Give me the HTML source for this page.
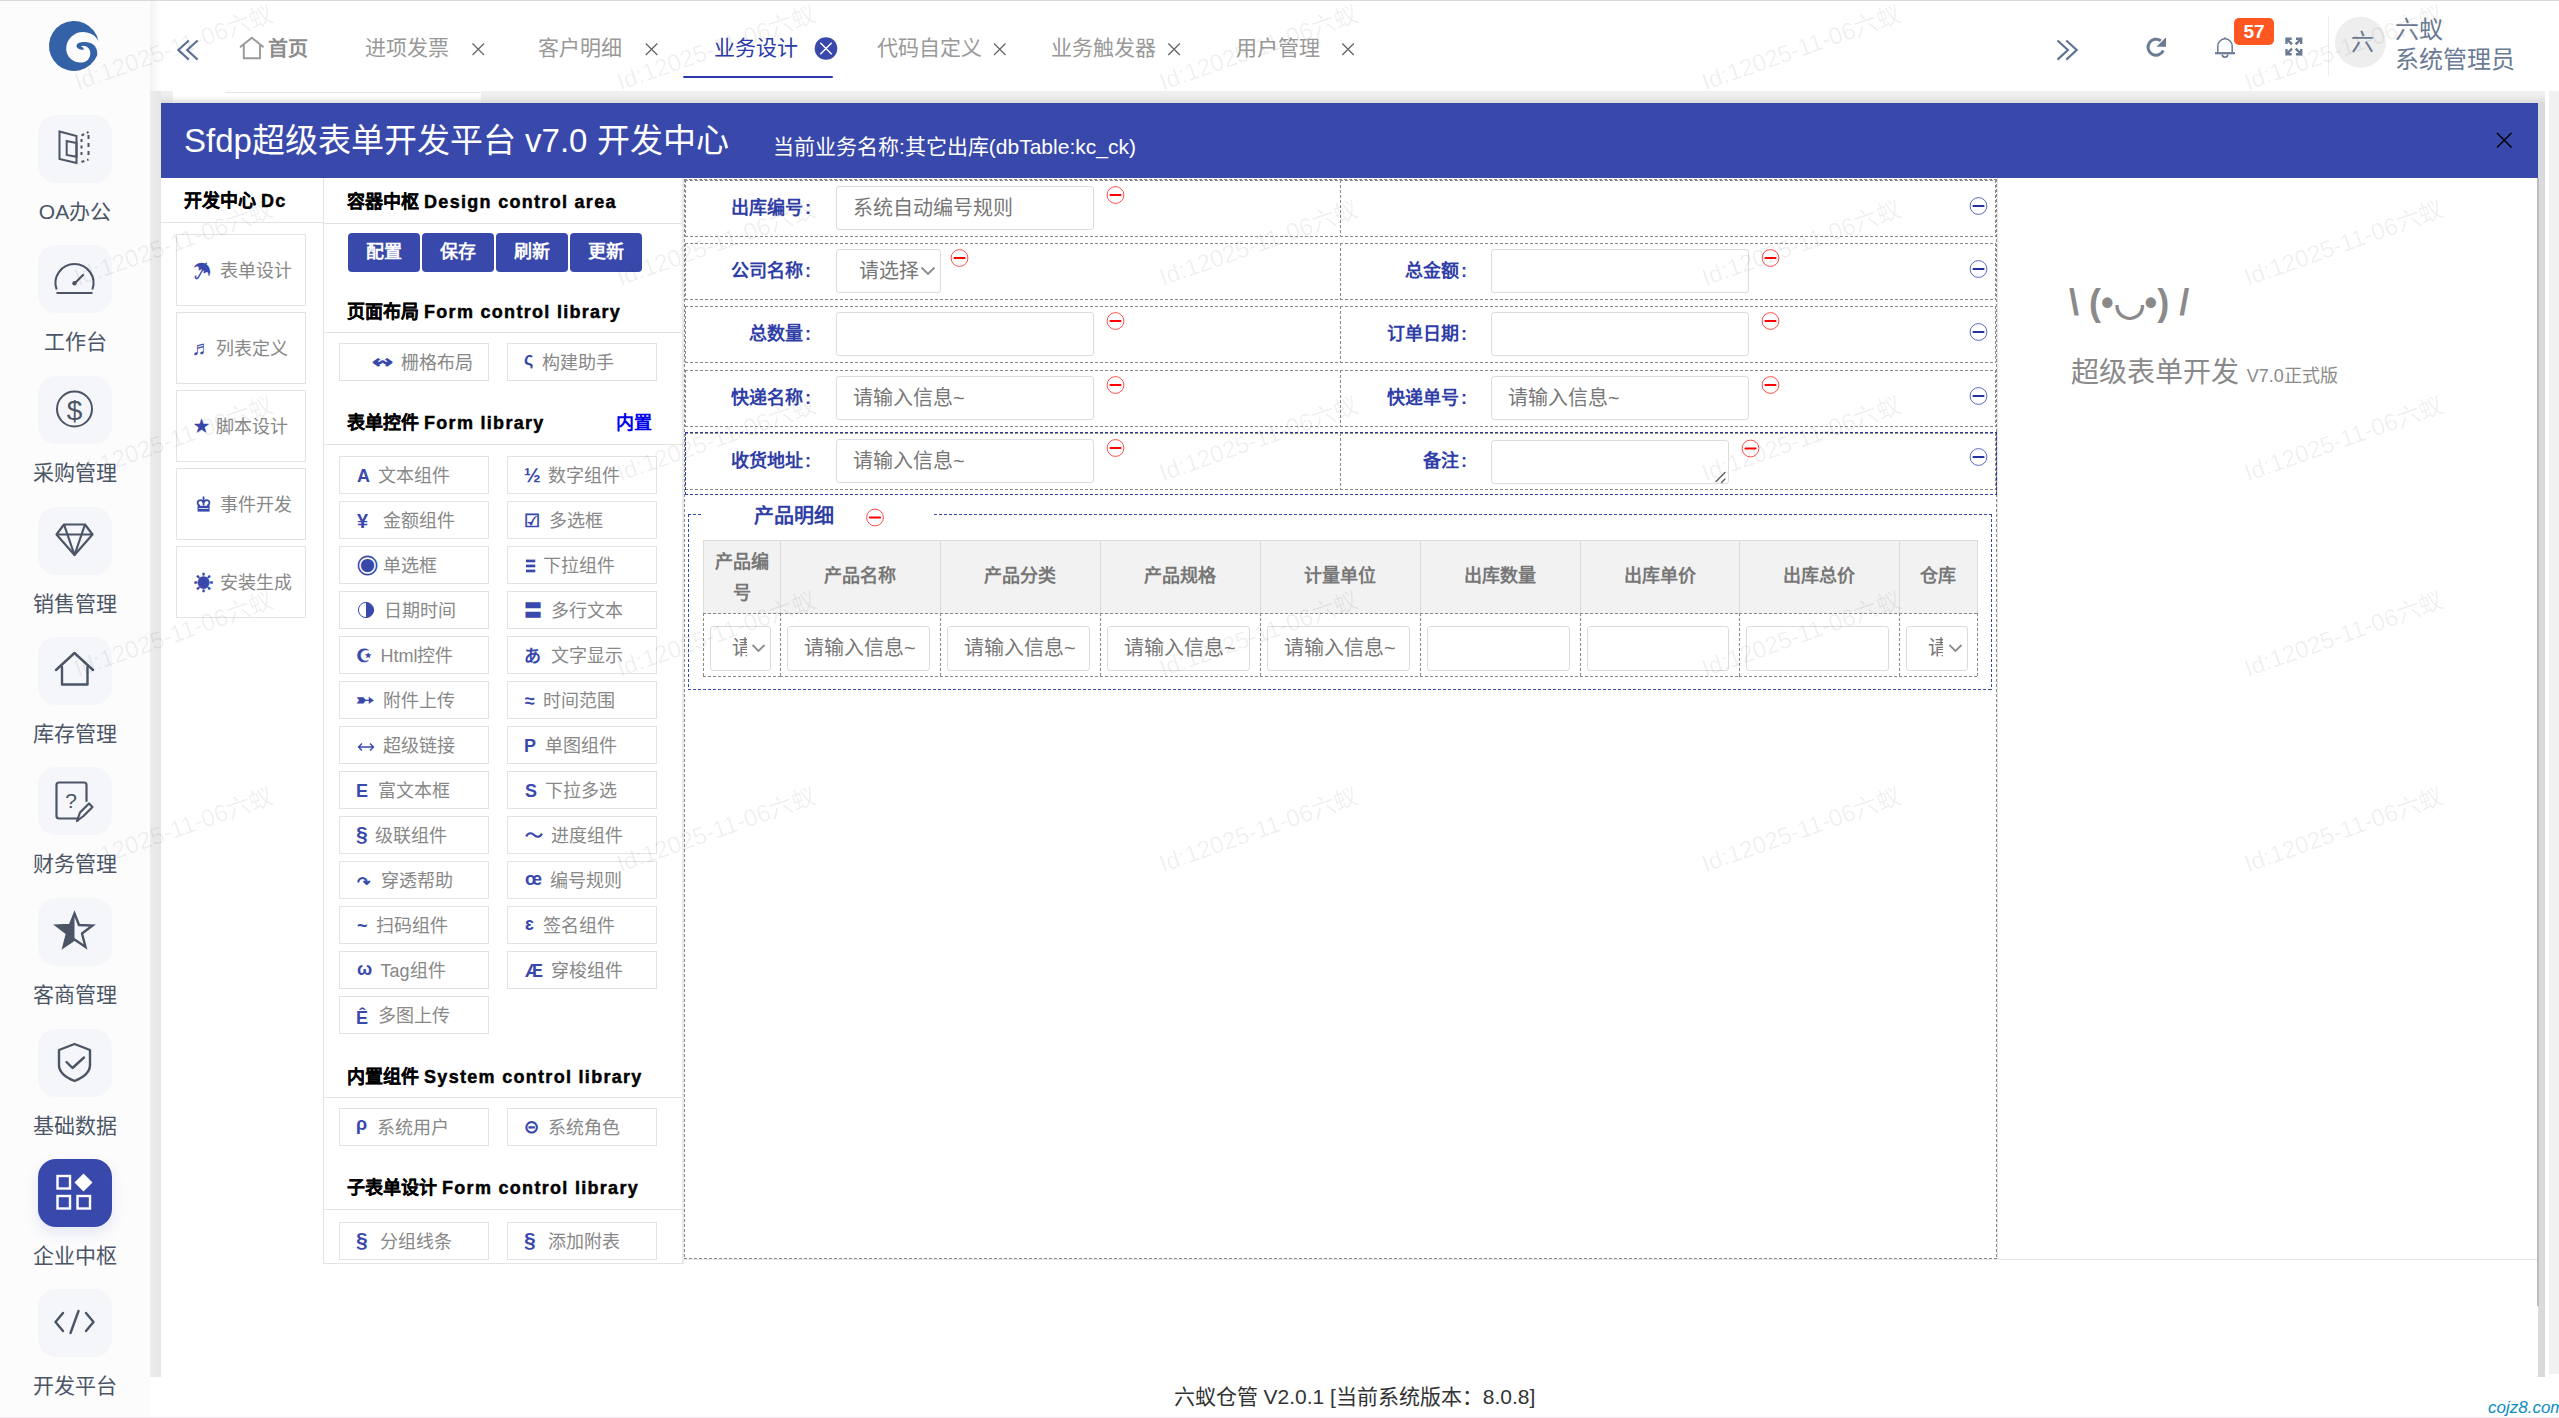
<!DOCTYPE html>
<html lang="zh-CN">
<head>
<meta charset="utf-8">
<title>Sfdp</title>
<style>
*{box-sizing:border-box;margin:0;padding:0}
html,body{width:2559px;height:1418px;overflow:hidden}
body{position:relative;font-family:"Liberation Sans",sans-serif;background:#fff;color:#333}
.a{position:absolute}
/* frame */
#topline{left:0;top:0;width:2559px;height:1px;background:#d9d9d9}
#side{left:0;top:1px;width:150px;height:1417px;background:#fcfcfd}
#hdr{left:150px;top:1px;width:2409px;height:90px;background:#fff}
#hdrsh{left:150px;top:1px;width:12px;height:90px;background:linear-gradient(90deg,#f3f3f3,#fff)}
#gtop{left:150px;top:91px;width:2395px;height:12px;background:linear-gradient(#f0f0f0 0,#eeeeee 5px,#dedede 11px,#dcdcdc 12px)}
#gleft{left:150px;top:91px;width:11px;height:1286px;background:linear-gradient(90deg,#ececec,#e6e6e6)}
#gright{left:2538px;top:103px;width:7px;height:1274px;background:#dadada}
#wright{left:2545px;top:91px;width:4px;height:1283px;background:#fff}
#rright{left:2549px;top:91px;width:10px;height:1283px;background:#f1f1f1}
#tabwhite{left:173px;top:91px;width:308px;height:12px;background:linear-gradient(#fff 0,#fff 5px,#e6e6e6 11px,#e2e2e2 12px)}
#tabline{left:225px;top:92px;width:256px;height:1px;background:#e6e6e6}
#modal{left:161px;top:103px;width:2377px;height:1274px;background:#fff;}
#mhead{left:161px;top:103px;width:2377px;height:75px;background:#3949ab}
#mscroll{left:2537px;top:178px;width:2px;height:1128px;background:#bdbdbd}
#footer{left:150px;top:1377px;width:2409px;height:40px;text-align:center;font-size:21px;color:#333;line-height:40px}
#botline{left:0;top:1417px;width:2559px;height:1px;background:#eee8ee}

/* sidebar */
.sbox{position:absolute;left:38px;width:74px;height:68px;border-radius:18px;background:#f4f6fa}
.sbox svg{position:absolute;left:0;top:0}
.slab{position:absolute;left:0;width:150px;text-align:center;font-size:21px;color:#4b5566;line-height:24px}

/* tabs */
.tab{position:absolute;top:34px;font-size:21px;line-height:28px;color:#999;white-space:nowrap}
.tabx{position:absolute;top:36px;width:14px;height:22px}
/*MODALCSS*/
.hd{font-size:18px;line-height:24px;font-weight:bold;color:#000;white-space:nowrap;-webkit-text-stroke:0.15px #000}
.lt{letter-spacing:1.3px;-webkit-text-stroke:0.45px #000}
.lbtn{width:130px;height:72px;border:1px solid #e3e3e3;white-space:nowrap}
.ic{color:#3949ab;font-weight:bold}
.bbtn{top:233px;width:72px;height:39px;border-radius:4px;background:#3949ab;color:#fff;font-size:18px;line-height:39px;text-align:center;font-weight:bold}
.pbtn{width:150px;height:38px;border:1px solid #e3e3e3;white-space:nowrap}
.pi{position:absolute;font-size:18px;line-height:30px;font-weight:bold;color:#3949ab}
.pt{position:absolute;top:6px;font-size:18px;line-height:30px;color:#888}
.flab{font-size:18px;line-height:24px;font-weight:bold;color:#2f3ea6;text-align:right;white-space:nowrap}
.inp{height:44px;border:1px solid #dcdcdc;border-radius:3px;background:#fff;font-size:20px;line-height:42px;color:#777;padding-left:16px;white-space:nowrap;overflow:hidden}
.th{font-size:18px;line-height:28px;font-weight:bold;color:#777;text-align:center}
/*/MODALCSS*/
</style>
</head>
<body>
<div id="topline" class="a"></div>
<div id="side" class="a"></div>
<div id="hdr" class="a"></div>
<div id="hdrsh" class="a"></div>
<div id="gtop" class="a"></div>
<div id="gleft" class="a"></div>
<div id="gright" class="a"></div>
<div id="wright" class="a"></div>
<div id="rright" class="a"></div>
<div id="tabwhite" class="a"></div>
<div id="tabline" class="a"></div>
<div id="modal" class="a"></div>
<div id="mhead" class="a"></div>
<div id="mscroll" class="a"></div>
<div id="footer" class="a">六蚁仓管 V2.0.1 [当前系统版本：8.0.8]</div>
<div id="botline" class="a"></div>
<div class="a" style="left:2488px;top:1397px;font-size:17px;line-height:22px;font-style:italic;color:#0d8cc0;white-space:nowrap">cojz8.com</div>


<!--SIDEBAR-->

<svg class="a" style="left:0;top:0" width="150" height="100" viewBox="0 0 150 100">
<path fill="#3462a6" transform="translate(0,1.2)" d="M98.5,40 A25,25 0 1 0 97.2,54 C98,47 94,41.5 87,41 C82,40.5 77,41.5 76.5,44.5 C76.5,47.5 80.5,48.8 83.5,48.6 C84.5,46.8 82.5,45.6 80.8,45.2 C82.5,44.2 86,44.5 88.5,47 C91,49.5 91,55 88,58.5 C85,61.5 80,62 75.5,60.5 C69.5,58 66.2,53 66.2,47.5 C66.2,38.5 73.5,30.8 83,30.8 C90,30.8 96,34.5 98.5,40 Z"/>
</svg>
<div class="sbox" style="top:115px;background:#f4f6fa;"></div>
<div class="slab" style="top:200px">OA办公</div>
<div class="sbox" style="top:245px;background:#f4f6fa;"></div>
<div class="slab" style="top:330px">工作台</div>
<div class="sbox" style="top:376px;background:#f4f6fa;"></div>
<div class="slab" style="top:461px">采购管理</div>
<div class="sbox" style="top:507px;background:#f4f6fa;"></div>
<div class="slab" style="top:592px">销售管理</div>
<div class="sbox" style="top:637px;background:#f4f6fa;"></div>
<div class="slab" style="top:722px">库存管理</div>
<div class="sbox" style="top:767px;background:#f4f6fa;"></div>
<div class="slab" style="top:852px">财务管理</div>
<div class="sbox" style="top:898px;background:#f4f6fa;"></div>
<div class="slab" style="top:983px">客商管理</div>
<div class="sbox" style="top:1029px;background:#f4f6fa;"></div>
<div class="slab" style="top:1114px">基础数据</div>
<div class="sbox" style="top:1159px;background:#3949ab;box-shadow:0 6px 14px rgba(57,73,171,.12);"></div>
<div class="slab" style="top:1244px">企业中枢</div>
<div class="sbox" style="top:1289px;background:#f4f6fa;"></div>
<div class="slab" style="top:1374px">开发平台</div>
<svg class="a" style="left:0;top:0" width="150" height="1418"><g fill="none" stroke="#4b5566" stroke-width="2" stroke-linejoin="miter"><path d="M59.5,131.5 L76.5,136 L76.5,163 L59.5,159 Z"/><path d="M66.7,141 L76.5,143 L76.5,156.7 L66.7,155 Z"/></g><g fill="none" stroke="#4b5566" stroke-width="2"><path d="M81.5,135.5 L88.5,132" stroke-dasharray="3,3"/><path d="M81.5,139 L81.5,158" stroke-dasharray="3,3.5"/><path d="M88.5,135 L88.5,158" stroke-dasharray="4,4"/><path d="M81.5,162 L88.5,159.5" stroke-dasharray="3,3"/></g><g fill="none" stroke="#4b5566" stroke-width="2.1" stroke-linecap="butt"><path d="M56.65,289.5 A19,19 0 1 1 92.35,289.5"/><path d="M56.5,293 L92.5,293"/><path d="M74.5,283.5 L83,275" stroke-linecap="round"/></g><circle cx="74.5" cy="283.3" r="2.2" fill="#4b5566"/><circle cx="74.5" cy="409" r="17.5" fill="none" stroke="#4b5566" stroke-width="2"/><text x="74.5" y="420" text-anchor="middle" font-family="Liberation Sans" font-size="28" fill="#4b5566">$</text><g fill="none" stroke="#4b5566" stroke-width="2.2" stroke-linejoin="round"><path d="M64,524.5 L85,524.5 L92.5,534.5 L74.5,555 L56.5,534.5 Z"/><path d="M56.5,534.5 L92.5,534.5"/><path d="M64,524.5 L74.5,555 L85,524.5"/></g><g fill="none" stroke="#4b5566" stroke-width="2.4" stroke-linejoin="round" stroke-linecap="round"><path d="M56,670 L74.5,653 L93,670"/><path d="M62,667 L62,684.5 L87.5,684.5 L87.5,667"/></g><g fill="none" stroke="#4b5566" stroke-width="2.2" stroke-linejoin="round" stroke-linecap="round"><path d="M78,818.5 L59,818.5 Q56.5,818.5 56.5,816 L56.5,785 Q56.5,782.5 59,782.5 L84,782.5 Q86.5,782.5 86.5,785 L86.5,801"/><path d="M77,821 L80,812.5 L89,803.5 L92.5,807 L83.5,816 Z"/></g><text x="71" y="808" text-anchor="middle" font-family="Liberation Sans" font-size="21" fill="#4b5566">?</text><path d="M74.5,913.5 L79,925 L92.5,925.5 L82,933.5 L85.5,947 L74.5,939.5 L63.5,947 L67,933.5 L56.5,925.5 L70,925 Z" fill="none" stroke="#4b5566" stroke-width="2.4" stroke-linejoin="miter"/><path d="M74.5,913.5 L70,925 L56.5,925.5 L67,933.5 L63.5,947 L74.5,939.5 Z" fill="#4b5566"/><g fill="none" stroke="#4b5566" stroke-width="2.4" stroke-linejoin="round" stroke-linecap="round"><path d="M74.5,1044 L90,1050 L90,1065 C90,1073 82,1078 74.5,1081 C67,1078 59,1073 59,1065 L59,1050 Z"/><path d="M66.5,1062 L72.5,1068 L84,1057.5"/></g><g fill="none" stroke="#fff" stroke-width="2.4"><rect x="57.5" y="1176" width="12.5" height="12.5"/><rect x="57.5" y="1196" width="12.5" height="12.5"/><rect x="77.5" y="1196" width="12.5" height="12.5"/></g><path d="M83.5,1173.5 L92.5,1182.5 L83.5,1191.5 L74.5,1182.5 Z" fill="#fff"/><g fill="none" stroke="#4b5566" stroke-width="2.4" stroke-linecap="round" stroke-linejoin="round"><path d="M63,1313 L55.5,1322 L63,1331"/><path d="M86,1313 L93.5,1322 L86,1331"/><path d="M78.5,1311 L70.5,1333"/></g></svg>
<!--/SIDEBAR-->
<!--HEADER-->

<svg class="a" style="left:150px;top:0" width="2409" height="91" viewBox="150 0 2409 91">
 <g fill="none" stroke="#5f7394" stroke-width="2.2" stroke-linecap="butt" stroke-linejoin="miter">
  <path d="M188.8,40.5 L178.4,50 L188.8,59.6"/><path d="M197.6,40.5 L187.2,50 L197.6,59.6"/>
 </g>
 <g fill="none" stroke="#9a9a9a" stroke-width="1.9">
  <path d="M240,47.3 L251.8,37.8 L263.6,47.3"/><path d="M243.8,45 L243.8,58.3 L260,58.3 L260,45"/>
 </g>
 <g fill="none" stroke="#5f7394" stroke-width="2.2">
  <path d="M2057.5,40.5 L2067.9,50 L2057.5,59.6"/><path d="M2066.3,40.5 L2076.7,50 L2066.3,59.6"/>
 </g>
 <path d="M2163.3,50.5 A8,8 0 1 1 2160.8,40.8" fill="none" stroke="#6b7b94" stroke-width="3"/>
 <path d="M2156.5,46.8 L2166,37.3 L2166,46.8 Z" fill="#6b7b94"/>
 <g fill="none" stroke="#6b7b94">
  <path d="M2217.8,52.5 L2217.8,46 A7.2,7.2 0 0 1 2232.2,46 L2232.2,52.5" stroke-width="1.5"/>
  <path d="M2215,53.2 L2235,53.2" stroke-width="2.2"/>
  <path d="M2222.3,54.5 A2.7,2.7 0 0 0 2227.7,54.5" stroke-width="1.7"/>
  <path d="M2225,37.2 L2225,38.8" stroke-width="1.5"/>
 </g>
 <g fill="none" stroke="#6b7b94" stroke-width="2.4">
  <path d="M2286.5,44 L2286.5,38.8 L2291.7,38.8 M2286.8,39.1 L2292,44.3"/>
  <path d="M2301.2,44 L2301.2,38.8 L2296,38.8 M2300.9,39.1 L2295.7,44.3"/>
  <path d="M2286.5,49 L2286.5,54.2 L2291.7,54.2 M2286.8,53.9 L2292,48.7"/>
  <path d="M2301.2,49 L2301.2,54.2 L2296,54.2 M2300.9,53.9 L2295.7,48.7"/>
 </g>
 <rect x="2328" y="16" width="1" height="60" fill="#ececec"/>
 <circle cx="2360.5" cy="42.3" r="25.5" fill="#eeeeee"/>
 <rect x="683" y="76" width="150" height="2" rx="1" fill="#2b3aa8"/>
 <circle cx="826" cy="48.5" r="11.3" fill="#3949ab"/>
 <path d="M820.3,42.8 L831.7,54.2 M831.7,42.8 L820.3,54.2" stroke="#fff" stroke-width="1.4"/>
 <g stroke="#666" stroke-width="1.3">
  <path d="M472.5,43.5 L484,55 M484,43.5 L472.5,55"/>
  <path d="M645.8,43.5 L657.3,55 M657.3,43.5 L645.8,55"/>
  <path d="M994,43.5 L1005.5,55 M1005.5,43.5 L994,55"/>
  <path d="M1168.3,43.5 L1179.8,55 M1179.8,43.5 L1168.3,55"/>
  <path d="M1342.3,43.5 L1353.8,55 M1353.8,43.5 L1342.3,55"/>
 </g>
</svg>
<div class="tab" style="left:268px;font-weight:bold;color:#8c8c8c;font-size:20px;top:35px">首页</div>
<div class="tab" style="left:365px">进项发票</div>
<div class="tab" style="left:538px">客户明细</div>
<div class="tab" style="left:714px;color:#2b3aa8">业务设计</div>
<div class="tab" style="left:877px">代码自定义</div>
<div class="tab" style="left:1051px">业务触发器</div>
<div class="tab" style="left:1236px">用户管理</div>
<div class="a" style="left:2234px;top:18px;width:40px;height:27px;background:#ff5722;border-radius:5px;color:#fff;font-weight:bold;font-size:19px;line-height:27px;text-align:center">57</div>
<div class="a" style="left:2351px;top:28px;font-size:23px;line-height:28px;color:#6b7b94">六</div>
<div class="a" style="left:2395px;top:16px;font-size:24px;line-height:28px;color:#6b7b94;white-space:nowrap">六蚁</div>
<div class="a" style="left:2395px;top:46px;font-size:24px;line-height:28px;color:#6b7b94;white-space:nowrap">系统管理员</div>
<!--/HEADER-->
<!--MODAL-->
<div class="a" style="left:184px;top:121px;font-size:33px;line-height:40px;color:#fff;white-space:nowrap">Sfdp超级表单开发平台 v7.0 开发中心</div>
<div class="a" style="left:773px;top:133px;font-size:21px;line-height:28px;color:#fff;white-space:nowrap">当前业务名称:其它出库(dbTable:kc_ck)</div>
<svg class="a" style="left:2490px;top:126px" width="28" height="28"><path d="M7,7 L21.5,21.5 M21.5,7 L7,21.5" stroke="#000" stroke-width="1.5"/></svg>
<div class="a" style="left:161px;top:222px;width:162px;height:1px;background:#e3e3e3"></div>
<div class="a" style="left:323px;top:178px;width:1px;height:1086px;background:#e3e3e3"></div>
<div class="a" style="left:682px;top:178px;width:2px;height:1086px;background:#e9e9e9"></div>
<div class="a" style="left:323px;top:1263px;width:360px;height:1px;background:#e3e3e3"></div>
<div class="a" style="left:1997px;top:178px;width:1px;height:1082px;background:#e6e6e6"></div>
<div class="a" style="left:684px;top:1259px;width:1853px;height:1px;background:#e6e6e6"></div>
<div class="a hd" style="left:184px;top:189px">开发中心 <span class="lt">Dc</span></div>
<div class="a hd" style="left:347px;top:190px">容器中枢 <span class="lt">Design control area</span></div>
<div class="a" style="left:323px;top:223px;width:359px;height:1px;background:#e3e3e3"></div>
<div class="a bbtn" style="left:348px">配置</div>
<div class="a bbtn" style="left:422px">保存</div>
<div class="a bbtn" style="left:496px">刷新</div>
<div class="a bbtn" style="left:570px">更新</div>
<div class="a hd" style="left:347px;top:300px">页面布局 <span class="lt">Form control library</span></div>
<div class="a" style="left:323px;top:332px;width:359px;height:1px;background:#e3e3e3"></div>
<div class="a hd" style="left:347px;top:411px">表单控件 <span class="lt">Form library</span></div><div class="a" style="left:616px;top:411px;font-size:18px;line-height:24px;font-weight:bold;color:#0000ee">内置</div>
<div class="a" style="left:323px;top:444px;width:359px;height:1px;background:#e3e3e3"></div>
<div class="a hd" style="left:347px;top:1065px">内置组件 <span class="lt">System control library</span></div>
<div class="a" style="left:323px;top:1097px;width:359px;height:1px;background:#e3e3e3"></div>
<div class="a hd" style="left:347px;top:1176px">子表单设计 <span class="lt">Form control library</span></div>
<div class="a" style="left:323px;top:1209px;width:359px;height:1px;background:#e3e3e3"></div>
<div class="a pbtn" style="left:339px;top:343px"><span class="pi" style="left:35px;top:3px;transform:scaleX(1.4)">↭</span><span class="pt" style="left:61px;top:4px">栅格布局</span></div>
<div class="a pbtn" style="left:507px;top:343px"><span class="pi" style="left:16px;top:0px;">ς</span><span class="pt" style="left:34.39999999999998px;top:4px">构建助手</span></div>
<div class="a pbtn" style="left:339px;top:456px"><span class="pi" style="left:17px;top:4px;">A</span><span class="pt" style="left:38px;top:4px">文本组件</span></div>
<div class="a pbtn" style="left:507px;top:456px"><span class="pi" style="left:16px;top:3px;font-size:20px">½</span><span class="pt" style="left:39.5px;top:4px">数字组件</span></div>
<div class="a pbtn" style="left:339px;top:501px"><span class="pi" style="left:17px;top:4px;font-size:20px">¥</span><span class="pt" style="left:43px;top:4px">金额组件</span></div>
<div class="a pbtn" style="left:507px;top:501px"><span class="pi" style="left:16px;top:4px;">☑</span><span class="pt" style="left:41px;top:4px">多选框</span></div>
<div class="a pbtn" style="left:339px;top:546px"><span class="pi" style="left:17px;top:4px;font-size:21px">◉</span><span class="pt" style="left:43px;top:4px">单选框</span></div>
<div class="a pbtn" style="left:507px;top:546px"><div class="a" style="left:17px;top:9px;width:18px;height:18px"><svg width="18" height="18"><rect x="1" y="3.6" width="9.3" height="2.7" fill="#3949ab"/><rect x="1" y="8.6" width="9.3" height="2.7" fill="#3949ab"/><rect x="1" y="13.6" width="9.3" height="2.7" fill="#3949ab"/></svg></div><span class="pt" style="left:35.39999999999998px;top:4px">下拉组件</span></div>
<div class="a pbtn" style="left:339px;top:591px"><div class="a" style="left:17px;top:9px;width:18px;height:18px"><svg width="18" height="18"><circle cx="9" cy="9" r="7.6" fill="none" stroke="#3949ab" stroke-width="1"/><path d="M9,1.4 A7.6,7.6 0 0 1 9,16.6 Z" fill="#3949ab"/></svg></div><span class="pt" style="left:44px;top:4px">日期时间</span></div>
<div class="a pbtn" style="left:507px;top:591px"><span class="pi" style="left:16px;top:4px;">〓</span><span class="pt" style="left:43px;top:4px">多行文本</span></div>
<div class="a pbtn" style="left:339px;top:636px"><span class="pi" style="left:16px;top:4px;">☪</span><span class="pt" style="left:40.5px;top:4px">Html控件</span></div>
<div class="a pbtn" style="left:507px;top:636px"><span class="pi" style="left:16px;top:5px;font-size:17px">あ</span><span class="pt" style="left:43px;top:4px">文字显示</span></div>
<div class="a pbtn" style="left:339px;top:681px"><span class="pi" style="left:17px;top:3px;transform:scaleX(1.2)">➳</span><span class="pt" style="left:43px;top:4px">附件上传</span></div>
<div class="a pbtn" style="left:507px;top:681px"><span class="pi" style="left:17px;top:4px;">≈</span><span class="pt" style="left:35px;top:4px">时间范围</span></div>
<div class="a pbtn" style="left:339px;top:726px"><div class="a" style="left:17px;top:9px;width:18px;height:18px"><svg width="18" height="18"><path d="M1.5,11 L16.5,11 M5,7.5 L1.5,11 L5,14.5 M13,7.5 L16.5,11 L13,14.5" fill="none" stroke="#3949ab" stroke-width="1.4"/></svg></div><span class="pt" style="left:43px;top:4px">超级链接</span></div>
<div class="a pbtn" style="left:507px;top:726px"><span class="pi" style="left:16px;top:4px;">P</span><span class="pt" style="left:37px;top:4px">单图组件</span></div>
<div class="a pbtn" style="left:339px;top:771px"><span class="pi" style="left:16px;top:4px;">E</span><span class="pt" style="left:37.5px;top:4px">富文本框</span></div>
<div class="a pbtn" style="left:507px;top:771px"><span class="pi" style="left:17px;top:4px;">S</span><span class="pt" style="left:36.5px;top:4px">下拉多选</span></div>
<div class="a pbtn" style="left:339px;top:816px"><span class="pi" style="left:16px;top:2px;font-size:21px">§</span><span class="pt" style="left:35px;top:4px">级联组件</span></div>
<div class="a pbtn" style="left:507px;top:816px"><span class="pi" style="left:17px;top:4px;">〜</span><span class="pt" style="left:43px;top:4px">进度组件</span></div>
<div class="a pbtn" style="left:339px;top:861px"><span class="pi" style="left:17px;top:6px;font-size:16px">↷</span><span class="pt" style="left:40.5px;top:4px">穿透帮助</span></div>
<div class="a pbtn" style="left:507px;top:861px"><span class="pi" style="left:17px;top:2px;">œ</span><span class="pt" style="left:41.700000000000045px;top:4px">编号规则</span></div>
<div class="a pbtn" style="left:339px;top:906px"><span class="pi" style="left:17px;top:4px;">~</span><span class="pt" style="left:36px;top:4px">扫码组件</span></div>
<div class="a pbtn" style="left:507px;top:906px"><span class="pi" style="left:17px;top:2px;">ɛ</span><span class="pt" style="left:35px;top:4px">签名组件</span></div>
<div class="a pbtn" style="left:339px;top:951px"><span class="pi" style="left:17px;top:2px;">ω</span><span class="pt" style="left:40.5px;top:4px">Tag组件</span></div>
<div class="a pbtn" style="left:507px;top:951px"><span class="pi" style="left:17px;top:4px;">Æ</span><span class="pt" style="left:43px;top:4px">穿梭组件</span></div>
<div class="a pbtn" style="left:339px;top:996px"><span class="pi" style="left:16px;top:6px;">Ê</span><span class="pt" style="left:37.5px;top:4px">多图上传</span></div>
<div class="a pbtn" style="left:339px;top:1108px"><span class="pi" style="left:16px;top:0px;">ρ</span><span class="pt" style="left:37px;top:4px">系统用户</span></div>
<div class="a pbtn" style="left:507px;top:1108px"><span class="pi" style="left:16px;top:3px;">⊝</span><span class="pt" style="left:39.5px;top:4px">系统角色</span></div>
<div class="a pbtn" style="left:339px;top:1222px"><span class="pi" style="left:16px;top:2px;font-size:21px">§</span><span class="pt" style="left:40.30000000000001px;top:4px">分组线条</span></div>
<div class="a pbtn" style="left:507px;top:1222px"><span class="pi" style="left:16px;top:2px;font-size:21px">§</span><span class="pt" style="left:39.799999999999955px;top:4px">添加附表</span></div>
<div class="a lbtn" style="left:176px;top:234px"><span class="pi" style="left:15.699999999999989px;top:22px;">☂</span><span class="pt" style="left:43px;top:21px">表单设计</span></div>
<div class="a lbtn" style="left:176px;top:312px"><span class="pi" style="left:14.699999999999989px;top:20px;font-size:20px">♬</span><span class="pt" style="left:39px;top:21px">列表定义</span></div>
<div class="a lbtn" style="left:176px;top:390px"><span class="pi" style="left:16.69999999999999px;top:20px;font-size:15px">★</span><span class="pt" style="left:39px;top:21px">脚本设计</span></div>
<div class="a lbtn" style="left:176px;top:468px"><div class="a" style="left:18px;top:26px;width:18px;height:18px"><svg width="18" height="18"><g transform="translate(1.8,1.5)"><path d="M3.2,9.3 C0.6,8.6 0.2,5.6 1.8,4.3 C3.6,2.9 6,4 6.7,6.5 M10.3,9.3 C12.9,8.6 13.3,5.6 11.7,4.3 C9.9,2.9 7.5,4 6.8,6.5 M6.75,0 L6.75,9" fill="none" stroke="#3949ab" stroke-width="1.8"/><rect x="0.8" y="9.3" width="12" height="5.8" fill="#3949ab"/><rect x="2" y="11.6" width="9.6" height="0.8" fill="#fff"/></g></svg></div><span class="pt" style="left:43px;top:21px">事件开发</span></div>
<div class="a lbtn" style="left:176px;top:546px"><span class="pi" style="left:16.69999999999999px;top:22px;font-size:19px">☀</span><span class="pt" style="left:43px;top:21px">安装生成</span></div>
<div class="a flab" style="left:700px;top:196px;width:111px">出库编号<span style="margin-left:2px">:</span></div>
<div class="a inp" style="left:836px;top:186px;width:258px">系统自动编号规则</div>
<div class="a flab" style="left:700px;top:259px;width:111px">公司名称<span style="margin-left:2px">:</span></div>
<div class="a inp" style="left:836px;top:249px;width:105px;padding-left:22px">请选择</div>
<div class="a flab" style="left:1300px;top:259px;width:167px">总金额<span style="margin-left:2px">:</span></div>
<div class="a inp" style="left:1491px;top:249px;width:258px"></div>
<div class="a flab" style="left:700px;top:322px;width:111px">总数量<span style="margin-left:2px">:</span></div>
<div class="a inp" style="left:836px;top:312px;width:258px"></div>
<div class="a flab" style="left:1300px;top:322px;width:167px">订单日期<span style="margin-left:2px">:</span></div>
<div class="a inp" style="left:1491px;top:312px;width:258px"></div>
<div class="a flab" style="left:700px;top:386px;width:111px">快递名称<span style="margin-left:2px">:</span></div>
<div class="a inp" style="left:836px;top:376px;width:258px">请输入信息~</div>
<div class="a flab" style="left:1300px;top:386px;width:167px">快递单号<span style="margin-left:2px">:</span></div>
<div class="a inp" style="left:1491px;top:376px;width:258px">请输入信息~</div>
<div class="a flab" style="left:700px;top:449px;width:111px">收货地址<span style="margin-left:2px">:</span></div>
<div class="a inp" style="left:836px;top:439px;width:258px">请输入信息~</div>
<div class="a flab" style="left:1300px;top:449px;width:167px">备注<span style="margin-left:2px">:</span></div>
<div class="a inp" style="left:1491px;top:440px;width:238px"></div>
<div class="a" style="left:754px;top:502px;font-size:20px;line-height:28px;font-weight:bold;color:#2f3ea6;white-space:nowrap">产品明细</div>
<div class="a" style="left:703px;top:540px;width:1275px;height:74px;background:#f2f2f2;border:1px solid #dcdcdc;border-bottom:none"></div>
<div class="a" style="left:780px;top:540px;width:1px;height:74px;background:#dcdcdc"></div>
<div class="a" style="left:940px;top:540px;width:1px;height:74px;background:#dcdcdc"></div>
<div class="a" style="left:1100px;top:540px;width:1px;height:74px;background:#dcdcdc"></div>
<div class="a" style="left:1260px;top:540px;width:1px;height:74px;background:#dcdcdc"></div>
<div class="a" style="left:1420px;top:540px;width:1px;height:74px;background:#dcdcdc"></div>
<div class="a" style="left:1580px;top:540px;width:1px;height:74px;background:#dcdcdc"></div>
<div class="a" style="left:1739px;top:540px;width:1px;height:74px;background:#dcdcdc"></div>
<div class="a" style="left:1899px;top:540px;width:1px;height:74px;background:#dcdcdc"></div>
<div class="a th" style="left:703px;top:547px;width:77px;line-height:31px">产品编<br>号</div>
<div class="a th" style="left:780px;top:562px;width:160px">产品名称</div>
<div class="a th" style="left:940px;top:562px;width:160px">产品分类</div>
<div class="a th" style="left:1100px;top:562px;width:160px">产品规格</div>
<div class="a th" style="left:1260px;top:562px;width:160px">计量单位</div>
<div class="a th" style="left:1420px;top:562px;width:160px">出库数量</div>
<div class="a th" style="left:1580px;top:562px;width:159px">出库单价</div>
<div class="a th" style="left:1739px;top:562px;width:160px">出库总价</div>
<div class="a th" style="left:1899px;top:562px;width:78px">仓库</div>
<div class="a inp sel" style="left:710px;top:626px;width:61px;height:45px;padding-left:0"><div class="a" style="left:21px;top:0;width:15px;height:43px;overflow:hidden">请</div></div>
<div class="a inp" style="left:787px;top:626px;width:143px;height:45px;padding-left:16px">请输入信息~</div>
<div class="a inp" style="left:947px;top:626px;width:143px;height:45px;padding-left:16px">请输入信息~</div>
<div class="a inp" style="left:1107px;top:626px;width:143px;height:45px;padding-left:16px">请输入信息~</div>
<div class="a inp" style="left:1267px;top:626px;width:143px;height:45px;padding-left:16px">请输入信息~</div>
<div class="a inp" style="left:1427px;top:626px;width:143px;height:45px;padding-left:16px"></div>
<div class="a inp" style="left:1587px;top:626px;width:142px;height:45px;padding-left:16px"></div>
<div class="a inp" style="left:1746px;top:626px;width:143px;height:45px;padding-left:16px"></div>
<div class="a inp sel" style="left:1906px;top:626px;width:62px;height:45px;padding-left:0"><div class="a" style="left:21px;top:0;width:15px;height:43px;overflow:hidden">请</div></div>
<svg class="a" style="left:0;top:0;pointer-events:none" width="2559" height="1418"><path d="M684,179.5 L1997,179.5" stroke="#8a8a8a" stroke-width="1" stroke-dasharray="3,2"/><path d="M684,1258.5 L1997,1258.5" stroke="#8a8a8a" stroke-width="1" stroke-dasharray="3,2"/><path d="M684.5,179 L684.5,1259" stroke="#8a8a8a" stroke-width="1" stroke-dasharray="3,2"/><path d="M1996.5,179 L1996.5,1259" stroke="#8a8a8a" stroke-width="1" stroke-dasharray="3,2"/><path d="M685,180.5 L1996,180.5" stroke="#8a8a8a" stroke-width="1" stroke-dasharray="3,2"/><path d="M685,236.5 L1996,236.5" stroke="#8a8a8a" stroke-width="1" stroke-dasharray="3,2"/><path d="M685.5,180 L685.5,237" stroke="#8a8a8a" stroke-width="1" stroke-dasharray="3,2"/><path d="M1995.5,180 L1995.5,237" stroke="#8a8a8a" stroke-width="1" stroke-dasharray="3,2"/><path d="M1340.5,180 L1340.5,237" stroke="#8a8a8a" stroke-width="1" stroke-dasharray="3,2"/><circle cx="1115.5" cy="195" r="8.4" fill="none" stroke="#ff4d4d" stroke-width="1"/><path d="M1110.5,195 L1120.5,195" stroke="#f00" stroke-width="2.2" stroke-linecap="round"/><circle cx="1978.5" cy="206" r="8.4" fill="none" stroke="#5a68c0" stroke-width="1"/><path d="M1973.5,206 L1983.5,206" stroke="#2230a0" stroke-width="2.2" stroke-linecap="round"/><path d="M685,243.5 L1996,243.5" stroke="#8a8a8a" stroke-width="1" stroke-dasharray="3,2"/><path d="M685,299.5 L1996,299.5" stroke="#8a8a8a" stroke-width="1" stroke-dasharray="3,2"/><path d="M685.5,243 L685.5,300" stroke="#8a8a8a" stroke-width="1" stroke-dasharray="3,2"/><path d="M1995.5,243 L1995.5,300" stroke="#8a8a8a" stroke-width="1" stroke-dasharray="3,2"/><path d="M1340.5,243 L1340.5,300" stroke="#8a8a8a" stroke-width="1" stroke-dasharray="3,2"/><path d="M921.5,267.5 L928,274 L934.5,267.5" fill="none" stroke="#8c8c8c" stroke-width="1.8"/><circle cx="959.5" cy="258" r="8.4" fill="none" stroke="#ff4d4d" stroke-width="1"/><path d="M954.5,258 L964.5,258" stroke="#f00" stroke-width="2.2" stroke-linecap="round"/><circle cx="1770.5" cy="258" r="8.4" fill="none" stroke="#ff4d4d" stroke-width="1"/><path d="M1765.5,258 L1775.5,258" stroke="#f00" stroke-width="2.2" stroke-linecap="round"/><circle cx="1978.5" cy="269" r="8.4" fill="none" stroke="#5a68c0" stroke-width="1"/><path d="M1973.5,269 L1983.5,269" stroke="#2230a0" stroke-width="2.2" stroke-linecap="round"/><path d="M685,306.5 L1996,306.5" stroke="#8a8a8a" stroke-width="1" stroke-dasharray="3,2"/><path d="M685,362.5 L1996,362.5" stroke="#8a8a8a" stroke-width="1" stroke-dasharray="3,2"/><path d="M685.5,306 L685.5,363" stroke="#8a8a8a" stroke-width="1" stroke-dasharray="3,2"/><path d="M1995.5,306 L1995.5,363" stroke="#8a8a8a" stroke-width="1" stroke-dasharray="3,2"/><path d="M1340.5,306 L1340.5,363" stroke="#8a8a8a" stroke-width="1" stroke-dasharray="3,2"/><circle cx="1115.5" cy="321" r="8.4" fill="none" stroke="#ff4d4d" stroke-width="1"/><path d="M1110.5,321 L1120.5,321" stroke="#f00" stroke-width="2.2" stroke-linecap="round"/><circle cx="1770.5" cy="321" r="8.4" fill="none" stroke="#ff4d4d" stroke-width="1"/><path d="M1765.5,321 L1775.5,321" stroke="#f00" stroke-width="2.2" stroke-linecap="round"/><circle cx="1978.5" cy="332" r="8.4" fill="none" stroke="#5a68c0" stroke-width="1"/><path d="M1973.5,332 L1983.5,332" stroke="#2230a0" stroke-width="2.2" stroke-linecap="round"/><path d="M685,370.5 L1996,370.5" stroke="#8a8a8a" stroke-width="1" stroke-dasharray="3,2"/><path d="M685,426.5 L1996,426.5" stroke="#8a8a8a" stroke-width="1" stroke-dasharray="3,2"/><path d="M685.5,370 L685.5,427" stroke="#8a8a8a" stroke-width="1" stroke-dasharray="3,2"/><path d="M1995.5,370 L1995.5,427" stroke="#8a8a8a" stroke-width="1" stroke-dasharray="3,2"/><path d="M1340.5,370 L1340.5,427" stroke="#8a8a8a" stroke-width="1" stroke-dasharray="3,2"/><circle cx="1115.5" cy="385" r="8.4" fill="none" stroke="#ff4d4d" stroke-width="1"/><path d="M1110.5,385 L1120.5,385" stroke="#f00" stroke-width="2.2" stroke-linecap="round"/><circle cx="1770.5" cy="385" r="8.4" fill="none" stroke="#ff4d4d" stroke-width="1"/><path d="M1765.5,385 L1775.5,385" stroke="#f00" stroke-width="2.2" stroke-linecap="round"/><circle cx="1978.5" cy="396" r="8.4" fill="none" stroke="#5a68c0" stroke-width="1"/><path d="M1973.5,396 L1983.5,396" stroke="#2230a0" stroke-width="2.2" stroke-linecap="round"/><path d="M685,433.5 L1996,433.5" stroke="#8a8a8a" stroke-width="1" stroke-dasharray="3,2"/><path d="M685,489.5 L1996,489.5" stroke="#8a8a8a" stroke-width="1" stroke-dasharray="3,2"/><path d="M685.5,433 L685.5,490" stroke="#8a8a8a" stroke-width="1" stroke-dasharray="3,2"/><path d="M1995.5,433 L1995.5,490" stroke="#8a8a8a" stroke-width="1" stroke-dasharray="3,2"/><path d="M1340.5,433 L1340.5,490" stroke="#8a8a8a" stroke-width="1" stroke-dasharray="3,2"/><circle cx="1115.5" cy="448" r="8.4" fill="none" stroke="#ff4d4d" stroke-width="1"/><path d="M1110.5,448 L1120.5,448" stroke="#f00" stroke-width="2.2" stroke-linecap="round"/><path d="M1725,472.5 L1716,481.5 M1725,479 L1721.5,482.5" stroke="#555" stroke-width="1.3" stroke-linecap="round"/><circle cx="1750.5" cy="448.5" r="8.4" fill="none" stroke="#ff4d4d" stroke-width="1"/><path d="M1745.5,448.5 L1755.5,448.5" stroke="#f00" stroke-width="2.2" stroke-linecap="round"/><circle cx="1978.5" cy="457" r="8.4" fill="none" stroke="#5a68c0" stroke-width="1"/><path d="M1973.5,457 L1983.5,457" stroke="#2230a0" stroke-width="2.2" stroke-linecap="round"/><path d="M685,432.5 L1997,432.5" stroke="#2d3aa8" stroke-width="1" stroke-dasharray="3,2"/><path d="M685,494.5 L1997,494.5" stroke="#2d3aa8" stroke-width="1" stroke-dasharray="3,2"/><path d="M685.5,432 L685.5,495" stroke="#2d3aa8" stroke-width="1" stroke-dasharray="3,2"/><path d="M1996.5,432 L1996.5,495" stroke="#2d3aa8" stroke-width="1" stroke-dasharray="3,2"/><path d="M688.5,514 L688.5,690" stroke="#3949ab" stroke-width="1" stroke-dasharray="3,2"/><path d="M1991.5,514 L1991.5,690" stroke="#3949ab" stroke-width="1" stroke-dasharray="3,2"/><path d="M688,689.5 L1992,689.5" stroke="#3949ab" stroke-width="1" stroke-dasharray="3,2"/><path d="M688,514.5 L701,514.5" stroke="#3949ab" stroke-width="1" stroke-dasharray="3,2"/><path d="M934,514.5 L1992,514.5" stroke="#3949ab" stroke-width="1" stroke-dasharray="3,2"/><circle cx="875" cy="517.5" r="8.4" fill="none" stroke="#ff4d4d" stroke-width="1"/><path d="M870,517.5 L880,517.5" stroke="#f00" stroke-width="2.2" stroke-linecap="round"/><path d="M703,613.5 L781,613.5" stroke="#8a8a8a" stroke-width="1" stroke-dasharray="3,2"/><path d="M703,676.5 L781,676.5" stroke="#8a8a8a" stroke-width="1" stroke-dasharray="3,2"/><path d="M703.5,613 L703.5,677" stroke="#8a8a8a" stroke-width="1" stroke-dasharray="3,2"/><path d="M780.5,613 L780.5,677" stroke="#8a8a8a" stroke-width="1" stroke-dasharray="3,2"/><path d="M752.5,645 L758.5,651 L764.5,645" fill="none" stroke="#8c8c8c" stroke-width="1.8"/><path d="M780,613.5 L941,613.5" stroke="#8a8a8a" stroke-width="1" stroke-dasharray="3,2"/><path d="M780,676.5 L941,676.5" stroke="#8a8a8a" stroke-width="1" stroke-dasharray="3,2"/><path d="M780.5,613 L780.5,677" stroke="#8a8a8a" stroke-width="1" stroke-dasharray="3,2"/><path d="M940.5,613 L940.5,677" stroke="#8a8a8a" stroke-width="1" stroke-dasharray="3,2"/><path d="M940,613.5 L1101,613.5" stroke="#8a8a8a" stroke-width="1" stroke-dasharray="3,2"/><path d="M940,676.5 L1101,676.5" stroke="#8a8a8a" stroke-width="1" stroke-dasharray="3,2"/><path d="M940.5,613 L940.5,677" stroke="#8a8a8a" stroke-width="1" stroke-dasharray="3,2"/><path d="M1100.5,613 L1100.5,677" stroke="#8a8a8a" stroke-width="1" stroke-dasharray="3,2"/><path d="M1100,613.5 L1261,613.5" stroke="#8a8a8a" stroke-width="1" stroke-dasharray="3,2"/><path d="M1100,676.5 L1261,676.5" stroke="#8a8a8a" stroke-width="1" stroke-dasharray="3,2"/><path d="M1100.5,613 L1100.5,677" stroke="#8a8a8a" stroke-width="1" stroke-dasharray="3,2"/><path d="M1260.5,613 L1260.5,677" stroke="#8a8a8a" stroke-width="1" stroke-dasharray="3,2"/><path d="M1260,613.5 L1421,613.5" stroke="#8a8a8a" stroke-width="1" stroke-dasharray="3,2"/><path d="M1260,676.5 L1421,676.5" stroke="#8a8a8a" stroke-width="1" stroke-dasharray="3,2"/><path d="M1260.5,613 L1260.5,677" stroke="#8a8a8a" stroke-width="1" stroke-dasharray="3,2"/><path d="M1420.5,613 L1420.5,677" stroke="#8a8a8a" stroke-width="1" stroke-dasharray="3,2"/><path d="M1420,613.5 L1581,613.5" stroke="#8a8a8a" stroke-width="1" stroke-dasharray="3,2"/><path d="M1420,676.5 L1581,676.5" stroke="#8a8a8a" stroke-width="1" stroke-dasharray="3,2"/><path d="M1420.5,613 L1420.5,677" stroke="#8a8a8a" stroke-width="1" stroke-dasharray="3,2"/><path d="M1580.5,613 L1580.5,677" stroke="#8a8a8a" stroke-width="1" stroke-dasharray="3,2"/><path d="M1580,613.5 L1740,613.5" stroke="#8a8a8a" stroke-width="1" stroke-dasharray="3,2"/><path d="M1580,676.5 L1740,676.5" stroke="#8a8a8a" stroke-width="1" stroke-dasharray="3,2"/><path d="M1580.5,613 L1580.5,677" stroke="#8a8a8a" stroke-width="1" stroke-dasharray="3,2"/><path d="M1739.5,613 L1739.5,677" stroke="#8a8a8a" stroke-width="1" stroke-dasharray="3,2"/><path d="M1739,613.5 L1900,613.5" stroke="#8a8a8a" stroke-width="1" stroke-dasharray="3,2"/><path d="M1739,676.5 L1900,676.5" stroke="#8a8a8a" stroke-width="1" stroke-dasharray="3,2"/><path d="M1739.5,613 L1739.5,677" stroke="#8a8a8a" stroke-width="1" stroke-dasharray="3,2"/><path d="M1899.5,613 L1899.5,677" stroke="#8a8a8a" stroke-width="1" stroke-dasharray="3,2"/><path d="M1899,613.5 L1978,613.5" stroke="#8a8a8a" stroke-width="1" stroke-dasharray="3,2"/><path d="M1899,676.5 L1978,676.5" stroke="#8a8a8a" stroke-width="1" stroke-dasharray="3,2"/><path d="M1899.5,613 L1899.5,677" stroke="#8a8a8a" stroke-width="1" stroke-dasharray="3,2"/><path d="M1977.5,613 L1977.5,677" stroke="#8a8a8a" stroke-width="1" stroke-dasharray="3,2"/><path d="M1949.5,645 L1955.5,651 L1961.5,645" fill="none" stroke="#8c8c8c" stroke-width="1.8"/></svg>
<div class="a" style="left:2069px;top:279px;font-size:36px;line-height:48px;font-weight:bold;color:#8a8a8a;white-space:nowrap">\ (•◡•) /</div>
<div class="a" style="left:2071px;top:355px;font-size:28px;line-height:36px;color:#8a8a8a;white-space:nowrap">超级表单开发 <span style="font-size:18px">V7.0正式版</span></div>
<!--/MODAL-->
<!--WM--><svg class="a" style="left:0;top:0;pointer-events:none" width="2559" height="1418"><g font-family="Liberation Sans" font-size="24" fill="rgba(0,0,0,0.065)"><text x="78.0" y="90.5" transform="rotate(-19.5 78.0 90.5)">Id:12025-11-06六蚁</text><text x="78.0" y="286.0" transform="rotate(-19.5 78.0 286.0)">Id:12025-11-06六蚁</text><text x="78.0" y="481.5" transform="rotate(-19.5 78.0 481.5)">Id:12025-11-06六蚁</text><text x="78.0" y="677.0" transform="rotate(-19.5 78.0 677.0)">Id:12025-11-06六蚁</text><text x="78.0" y="872.5" transform="rotate(-19.5 78.0 872.5)">Id:12025-11-06六蚁</text><text x="620.5" y="90.5" transform="rotate(-19.5 620.5 90.5)">Id:12025-11-06六蚁</text><text x="620.5" y="286.0" transform="rotate(-19.5 620.5 286.0)">Id:12025-11-06六蚁</text><text x="620.5" y="481.5" transform="rotate(-19.5 620.5 481.5)">Id:12025-11-06六蚁</text><text x="620.5" y="677.0" transform="rotate(-19.5 620.5 677.0)">Id:12025-11-06六蚁</text><text x="620.5" y="872.5" transform="rotate(-19.5 620.5 872.5)">Id:12025-11-06六蚁</text><text x="1163.0" y="90.5" transform="rotate(-19.5 1163.0 90.5)">Id:12025-11-06六蚁</text><text x="1163.0" y="286.0" transform="rotate(-19.5 1163.0 286.0)">Id:12025-11-06六蚁</text><text x="1163.0" y="481.5" transform="rotate(-19.5 1163.0 481.5)">Id:12025-11-06六蚁</text><text x="1163.0" y="677.0" transform="rotate(-19.5 1163.0 677.0)">Id:12025-11-06六蚁</text><text x="1163.0" y="872.5" transform="rotate(-19.5 1163.0 872.5)">Id:12025-11-06六蚁</text><text x="1705.5" y="90.5" transform="rotate(-19.5 1705.5 90.5)">Id:12025-11-06六蚁</text><text x="1705.5" y="286.0" transform="rotate(-19.5 1705.5 286.0)">Id:12025-11-06六蚁</text><text x="1705.5" y="481.5" transform="rotate(-19.5 1705.5 481.5)">Id:12025-11-06六蚁</text><text x="1705.5" y="677.0" transform="rotate(-19.5 1705.5 677.0)">Id:12025-11-06六蚁</text><text x="1705.5" y="872.5" transform="rotate(-19.5 1705.5 872.5)">Id:12025-11-06六蚁</text><text x="2248.0" y="90.5" transform="rotate(-19.5 2248.0 90.5)">Id:12025-11-06六蚁</text><text x="2248.0" y="286.0" transform="rotate(-19.5 2248.0 286.0)">Id:12025-11-06六蚁</text><text x="2248.0" y="481.5" transform="rotate(-19.5 2248.0 481.5)">Id:12025-11-06六蚁</text><text x="2248.0" y="677.0" transform="rotate(-19.5 2248.0 677.0)">Id:12025-11-06六蚁</text><text x="2248.0" y="872.5" transform="rotate(-19.5 2248.0 872.5)">Id:12025-11-06六蚁</text></g></svg><!--/WM-->
</body>
</html>
